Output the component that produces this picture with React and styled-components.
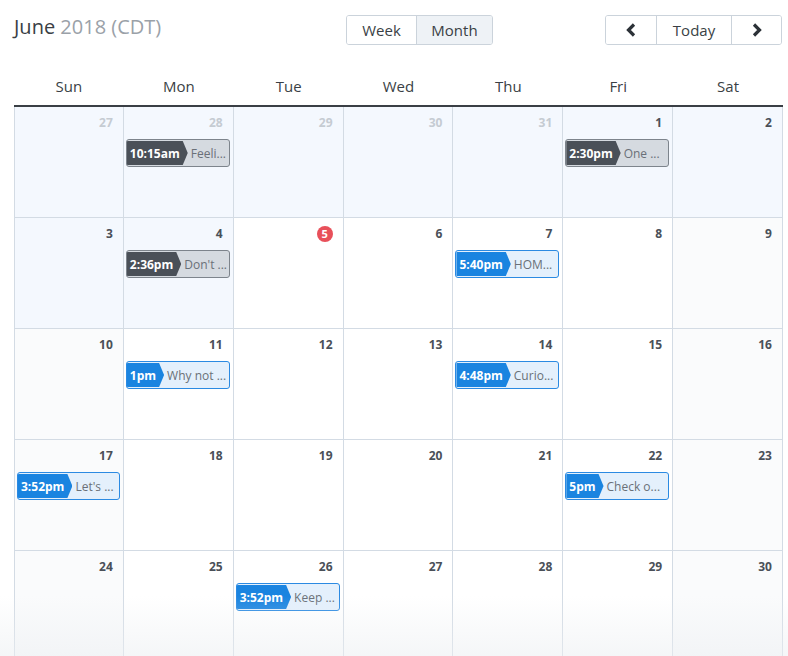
import React from 'react';
import styled, { createGlobalStyle } from 'styled-components';

const GlobalStyle = createGlobalStyle`
  html, body {
    margin: 0;
    padding: 0;
    background: #fff;
    font-family: "Open Sans", "Noto Sans", sans-serif;
    color: #3a3f45;
  }
`;

const Page = styled.div`
  position: relative;
  width: 788px;
  height: 656px;
  overflow: hidden;
  padding: 15px 5px 0 14px;
  box-sizing: border-box;
`;

const Toolbar = styled.div`
  display: grid;
  grid-template-columns: 332px 1fr auto;
  align-items: center;
  height: 30px;
  margin-right: 1px;
`;

const Title = styled.h1`
  margin: 0;
  font-size: 20px;
  font-weight: 400;
  color: #3a3f45;
  line-height: 22px;
  margin-top: -6px;

  span {
    color: #9aa1a8;
  }
`;

const ButtonGroup = styled.div`
  display: flex;
  height: 30px;
  border: 1px solid #cbd3db;
  border-radius: 3px;
  box-sizing: border-box;
  overflow: hidden;
  justify-self: ${p => (p.$end ? 'end' : 'start')};
`;

const Btn = styled.button`
  font-family: inherit;
  font-size: 15px;
  color: #3a3f45;
  border: none;
  border-left: ${p => (p.$first ? 'none' : '1px solid #cbd3db')};
  background: ${p => (p.$active ? '#eef2f6' : '#fff')};
  width: ${p => p.$w}px;
  padding: 0;
  display: flex;
  align-items: center;
  justify-content: center;
`;

const Grid = styled.div`
  margin-top: 22px;
  display: grid;
  grid-template-columns: repeat(7, minmax(0, 1fr));
`;

const DayName = styled.div`
  height: 38px;
  display: flex;
  align-items: center;
  justify-content: center;
  font-size: 15px;
  color: #3a3f45;
  border-bottom: 2px solid #3a3f45;
`;

const Cell = styled.div`
  height: 111px;
  min-width: 0;
  box-sizing: border-box;
  border-right: 1px solid #d3dbe4;
  border-bottom: 1px solid #d3dbe4;
  border-left: ${p => (p.$col === 0 ? '1px solid #d3dbe4' : 'none')};
  background: ${p => (p.$past ? '#f4f8fe' : p.$weekend ? '#fafbfc' : '#fff')};
  padding: 8px 3px 0 2px;
  display: flex;
  flex-direction: column;
`;

const DayNum = styled.div`
  align-self: flex-end;
  height: 16px;
  margin-right: 7px;
  font-size: 12px;
  font-weight: 700;
  line-height: 16px;
  color: ${p => (p.$other ? '#c5cbd2' : '#4a5058')};
`;

const TodayBadge = styled.div`
  align-self: flex-end;
  width: 16px;
  height: 16px;
  border-radius: 50%;
  background: #e8505a;
  color: #fff;
  font-size: 11px;
  font-weight: 700;
  line-height: 16px;
  text-align: center;
  margin-right: 7px;
`;

const Chip = styled.div`
  margin-top: 8px;
  height: 28px;
  box-sizing: border-box;
  display: flex;
  align-items: stretch;
  border: 1px solid ${p => (p.$kind === 'blue' ? '#2b8ae2' : '#7d848c')};
  border-radius: 3px;
  overflow: hidden;
  background: ${p => (p.$kind === 'blue' ? '#e4f0fc' : '#d5dae0')};
  font-size: 12px;
`;

const ChipTime = styled.div`
  flex: none;
  display: flex;
  align-items: center;
  padding: 0 8px 0 3px;
  margin: 1px 0;
  color: #fff;
  font-weight: 700;
  background: ${p => (p.$kind === 'blue' ? '#1a84e0' : '#4a5058')};
  clip-path: polygon(0 0, calc(100% - 5px) 0, 100% 50%, calc(100% - 5px) 100%, 0 100%);
`;

const ChipText = styled.div`
  flex: 1;
  min-width: 0;
  display: flex;
  align-items: center;
  padding: 0 2px 0 3px;
  color: #6a7078;
  white-space: nowrap;
  overflow: hidden;
`;

const Fade = styled.div`
  position: absolute;
  left: 0;
  right: 0;
  bottom: 0;
  height: 60px;
  background: linear-gradient(rgba(255, 255, 255, 0), rgba(236, 239, 242, 0.55));
  pointer-events: none;
`;

const Chevron = ({ dir }) => (
  <svg width="12" height="14" viewBox="0 0 12 14">
    <path
      d={dir === 'left' ? 'M9 1.5 L3.5 7 L9 12.5' : 'M3 1.5 L8.5 7 L3 12.5'}
      fill="none"
      stroke="#2c3238"
      strokeWidth="3.2"
    />
  </svg>
);

const days = ['Sun', 'Mon', 'Tue', 'Wed', 'Thu', 'Fri', 'Sat'];

const events = {
  '5-28': { time: '10:15am', text: 'Feeli...', kind: 'gray' },
  '6-1': { time: '2:30pm', text: 'One ...', kind: 'gray' },
  '6-4': { time: '2:36pm', text: "Don't ...", kind: 'gray' },
  '6-7': { time: '5:40pm', text: 'HOM...', kind: 'blue' },
  '6-11': { time: '1pm', text: 'Why not ...', kind: 'blue' },
  '6-14': { time: '4:48pm', text: 'Curio...', kind: 'blue' },
  '6-17': { time: '3:52pm', text: "Let's ...", kind: 'blue' },
  '6-22': { time: '5pm', text: 'Check o...', kind: 'blue' },
  '6-26': { time: '3:52pm', text: 'Keep ...', kind: 'blue' },
};

const buildCells = () => {
  const cells = [];
  [27, 28, 29, 30, 31].forEach(d => cells.push({ d, other: true, key: `5-${d}` }));
  for (let d = 1; d <= 30; d++) cells.push({ d, other: false, key: `6-${d}` });
  return cells;
};

const App = () => {
  const cells = buildCells();
  return (
    <Page>
      <GlobalStyle />
      <Toolbar>
        <Title>
          June <span>2018 (CDT)</span>
        </Title>
        <ButtonGroup>
          <Btn $first $w={69}>Week</Btn>
          <Btn $active $w={76}>Month</Btn>
        </ButtonGroup>
        <ButtonGroup $end>
          <Btn $first $w={50}>
            <Chevron dir="left" />
          </Btn>
          <Btn $w={75}>Today</Btn>
          <Btn $w={50}>
            <Chevron dir="right" />
          </Btn>
        </ButtonGroup>
      </Toolbar>
      <Grid>
        {days.map(d => (
          <DayName key={d}>{d}</DayName>
        ))}
        {cells.map((c, i) => {
          const col = i % 7;
          const ev = events[c.key];
          const past = c.other || c.d < 5;
          return (
            <Cell key={c.key} $col={col} $past={past} $weekend={col === 0 || col === 6}>
              {c.d === 5 && !c.other ? (
                <TodayBadge>5</TodayBadge>
              ) : (
                <DayNum $other={c.other}>{c.d}</DayNum>
              )}
              {ev && (
                <Chip $kind={ev.kind}>
                  <ChipTime $kind={ev.kind}>{ev.time}</ChipTime>
                  <ChipText>{ev.text}</ChipText>
                </Chip>
              )}
            </Cell>
          );
        })}
      </Grid>
      <Fade />
    </Page>
  );
};

export default App;
